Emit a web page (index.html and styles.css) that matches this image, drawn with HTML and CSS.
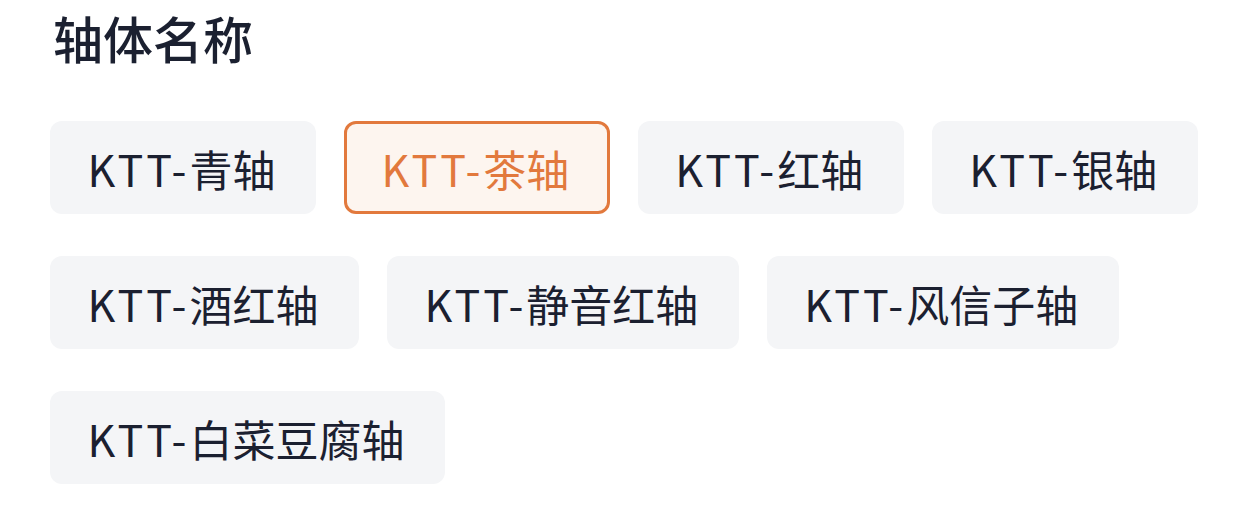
FILE: index.html
```html
<!DOCTYPE html>
<html lang="zh">
<head>
<meta charset="utf-8">
<link rel="stylesheet" href="styles.css">
</head>
<body>
<section class="panel">
  <h2 class="title">轴体名称</h2>
  <div class="chips">
    <span class="chip"><span class="code">KTT-</span>青轴</span>
    <span class="chip chip-active"><span class="code">KTT-</span>茶轴</span>
    <span class="chip"><span class="code">KTT-</span>红轴</span>
    <span class="chip"><span class="code">KTT-</span>银轴</span>
    <span class="chip"><span class="code">KTT-</span>酒红轴</span>
    <span class="chip"><span class="code">KTT-</span>静音红轴</span>
    <span class="chip"><span class="code">KTT-</span>风信子轴</span>
    <span class="chip"><span class="code">KTT-</span>白菜豆腐轴</span>
  </div>
</section>
</body>
</html>
```
FILE: styles.css
```css
html, body {
  margin: 0;
  padding: 0;
  background: #ffffff;
}
body {
  font-family: "Noto Sans CJK SC", "Noto Sans", sans-serif;
  color: #1b2030;
}
.panel {
  padding: 3px 0 0 50px;
}
.title {
  margin: 0;
  font-size: 50px;
  font-weight: 500;
  line-height: 68px;
  padding-left: 3px;
}
.chips {
  margin-top: 50px;
  display: flex;
  flex-wrap: wrap;
  column-gap: 28px;
  row-gap: 42px;
  max-width: 1180px;
}
.chip {
  box-sizing: border-box;
  height: 93px;
  padding: 0 40.5px 0 37.5px;
  display: flex;
  align-items: center;
  background: #f4f5f7;
  border-radius: 12px;
  font-size: 43px;
  color: #1b2030;
  white-space: nowrap;
}
.code {
  letter-spacing: 3px;
}
.chip-active {
  background: #fdf5ef;
  border: 3px solid #e2793d;
  color: #e2793d;
  padding: 0 37.5px 0 34.5px;
}
```
